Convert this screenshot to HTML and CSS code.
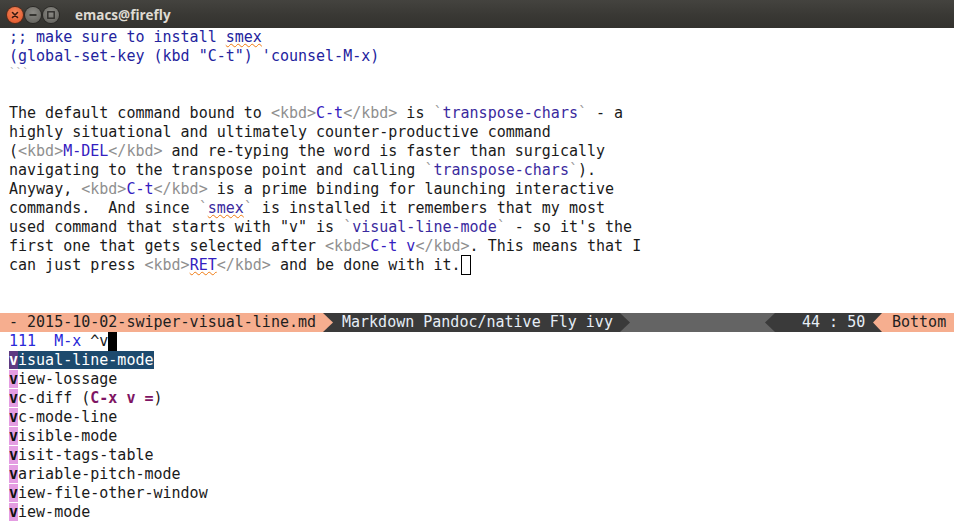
FILE: index.html
```html
<!DOCTYPE html>
<html>
<head>
<meta charset="utf-8">
<link rel="stylesheet" href="styles.css">
</head>
<body>
<div class="window">
  <div class="titlebar">
    <div class="buttons">
      <span class="btn close"><svg width="16" height="16" viewBox="0 0 16 16"><path d="M5.5 5.5 L10.5 10.5 M10.5 5.5 L5.5 10.5" stroke="#3a1a10" stroke-width="1.6" stroke-linecap="round"/></svg></span>
      <span class="btn"><svg width="16" height="16" viewBox="0 0 16 16"><path d="M4.5 8 H11.5" stroke="#2e2d2a" stroke-width="1.8"/></svg></span>
      <span class="btn"><svg width="16" height="16" viewBox="0 0 16 16"><rect x="4.8" y="4.8" width="6.4" height="6.4" fill="none" stroke="#2e2d2a" stroke-width="1.4"/></svg></span>
    </div>
    <span class="title">emacs@firefly</span>
  </div>
  <div class="buffer">
    <div class="line code">;; make sure to install <span class="spell">smex</span></div>
    <div class="line code">(global-set-key (kbd "C-t") 'counsel-M-x)</div>
    <div class="line"><span class="fence">```</span></div>
    <div class="line"> </div>
    <div class="line">The default command bound to <span class="tag">&lt;kbd&gt;</span><span class="key">C-t</span><span class="tag">&lt;/kbd&gt;</span> is <span class="tick">`</span><span class="ic">transpose-chars</span><span class="tick">`</span> - a</div>
    <div class="line">highly situational and ultimately counter-productive command</div>
    <div class="line">(<span class="tag">&lt;kbd&gt;</span><span class="key">M-DEL</span><span class="tag">&lt;/kbd&gt;</span> and re-typing the word is faster than surgically</div>
    <div class="line">navigating to the transpose point and calling <span class="tick">`</span><span class="ic">transpose-chars</span><span class="tick">`</span>).</div>
    <div class="line">Anyway, <span class="tag">&lt;kbd&gt;</span><span class="key">C-t</span><span class="tag">&lt;/kbd&gt;</span> is a prime binding for launching interactive</div>
    <div class="line">commands.  And since <span class="tick">`</span><span class="ic spell">smex</span><span class="tick">`</span> is installed it remembers that my most</div>
    <div class="line">used command that starts with "v" is <span class="tick">`</span><span class="ic">visual-line-mode</span><span class="tick">`</span> - so it's the</div>
    <div class="line">first one that gets selected after <span class="tag">&lt;kbd&gt;</span><span class="key">C-t v</span><span class="tag">&lt;/kbd&gt;</span>. This means that I</div>
    <div class="line">can just press <span class="tag">&lt;kbd&gt;</span><span class="key spell">RET</span><span class="tag">&lt;/kbd&gt;</span> and be done with it.<span class="hollow"> </span></div>
    <div class="line"> </div>
    <div class="line"> </div>
  </div>
  <div class="modeline">
    <span class="seg s-salmon first">- 2015-10-02-swiper-visual-line.md</span>
    <span class="arrow right on-dark"></span>
    <span class="seg s-dark mode">Markdown Pandoc/native Fly ivy</span>
    <span class="arrow right dark-on-grey"></span>
    <span class="seg s-grey fill"></span>
    <span class="arrow left dark-on-grey"></span>
    <span class="seg s-dark pos">44 : 50</span>
    <span class="arrow left salmon-on-dark"></span>
    <span class="seg s-salmon last">Bottom</span>
  </div>
  <div class="minibuf">
    <div class="line"><span class="prompt">111  M-x </span>^v<span class="cursor"> </span></div>
    <div class="line"><span class="cand sel"><span class="m">v</span>isual-line-mode</span></div>
    <div class="line"><span class="m">v</span>iew-lossage</div>
    <div class="line"><span class="m">v</span>c-diff (<span class="bind">C-x v =</span>)</div>
    <div class="line"><span class="m">v</span>c-mode-line</div>
    <div class="line"><span class="m">v</span>isible-mode</div>
    <div class="line"><span class="m">v</span>isit-tags-table</div>
    <div class="line"><span class="m">v</span>ariable-pitch-mode</div>
    <div class="line"><span class="m">v</span>iew-file-other-window</div>
    <div class="line"><span class="m">v</span>iew-mode</div>
  </div>
</div>
</body>
</html>
```

FILE: styles.css
```css
html, body {
  margin: 0;
  padding: 0;
  background: #ffffff;
}

.window {
  width: 954px;
  height: 522px;
  overflow: hidden;
  font-family: "DejaVu Sans Mono", monospace;
  font-size: 15px;
  color: #1a1a1a;
}

.titlebar {
  height: 28px;
  display: flex;
  align-items: center;
  background: linear-gradient(#44433f, #3a3935 50%, #33322e);
}

.buttons {
  display: flex;
  gap: 2px;
  padding-left: 7px;
  padding-top: 2px;
}

.btn {
  width: 16px;
  height: 16px;
  border-radius: 50%;
  display: flex;
  background: radial-gradient(circle at 50% 35%, #8a8984, #5e5d58);
  box-shadow: 0 0 0 1px #2a2926;
}

.btn.close {
  background: radial-gradient(circle at 50% 35%, #f58a5e, #df4e22);
  box-shadow: 0 0 0 1px #5a2a18;
}

.title {
  font-family: "Open Sans", "DejaVu Sans", sans-serif;
  font-weight: 700;
  font-size: 13.5px;
  color: #dfdbd2;
  margin-left: 16px;
  padding-top: 1px;
}

.line {
  height: 19px;
  line-height: 19px;
  white-space: pre;
  padding-left: 9px;
}

.code {
  color: #23239e;
}

.fence {
  color: #b0b0b0;
  font-size: 11px;
  vertical-align: top;
  line-height: 13px;
}

.tag {
  color: #8f8f8f;
}

.key {
  color: #3420c0;
}

.tick {
  color: #9a9a9a;
}

.ic {
  color: #3a2a9e;
}

.spell {
  text-decoration: underline wavy #f07a10;
  text-decoration-thickness: 1px;
  text-underline-offset: 1px;
}

.hollow {
  display: inline-block;
  width: 8px;
  height: 18px;
  border: 1px solid #000;
  vertical-align: top;
  box-sizing: content-box;
  margin-top: -1px;
}

.modeline {
  display: flex;
  height: 19px;
  line-height: 19px;
  white-space: pre;
}

.seg {
  height: 19px;
}

.s-salmon {
  background: #f6ae8f;
  color: #1e1e1e;
}

.s-dark {
  background: #3a3a3a;
  color: #e6eef6;
}

.s-grey {
  background: #646464;
}

.first {
  width: 323px;
  padding-left: 9px;
  box-sizing: border-box;
}

.mode {
  width: 287px;
  padding-left: 9px;
  box-sizing: border-box;
}

.fill {
  flex: 1;
}

.pos {
  width: 98px;
  padding-left: 27px;
  box-sizing: border-box;
}

.last {
  width: 72px;
  padding-left: 10px;
  box-sizing: border-box;
}

.arrow {
  width: 10px;
  height: 19px;
  position: relative;
}

.arrow::before {
  content: "";
  position: absolute;
  inset: 0;
}

.arrow.right::before {
  clip-path: polygon(0 0, 100% 50%, 0 100%);
}

.arrow.left::before {
  clip-path: polygon(100% 0, 0 50%, 100% 100%);
}

.on-dark {
  background: #3a3a3a;
}
.on-dark::before {
  background: #f6ae8f;
}

.dark-on-grey {
  background: #646464;
}
.dark-on-grey::before {
  background: #3a3a3a;
}

.salmon-on-dark {
  background: #3a3a3a;
}
.salmon-on-dark::before {
  background: #f6ae8f;
}

.arrow.left.salmon-on-dark {
  width: 9px;
}

.minibuf .line {
  color: #1a1a1a;
}

.prompt {
  color: #2a2ad8;
}

.cursor {
  display: inline-block;
  width: 9px;
  height: 19px;
  background: #000;
  vertical-align: top;
}

.m {
  font-weight: 700;
  background: #e49de2;
  color: #111;
}

.sel {
  background: #1d4a6e;
  color: #ffffff;
}

.sel .m {
  background: #5e3a82;
  color: #ffffff;
}

.bind {
  font-weight: 700;
  color: #7e1463;
}
```
